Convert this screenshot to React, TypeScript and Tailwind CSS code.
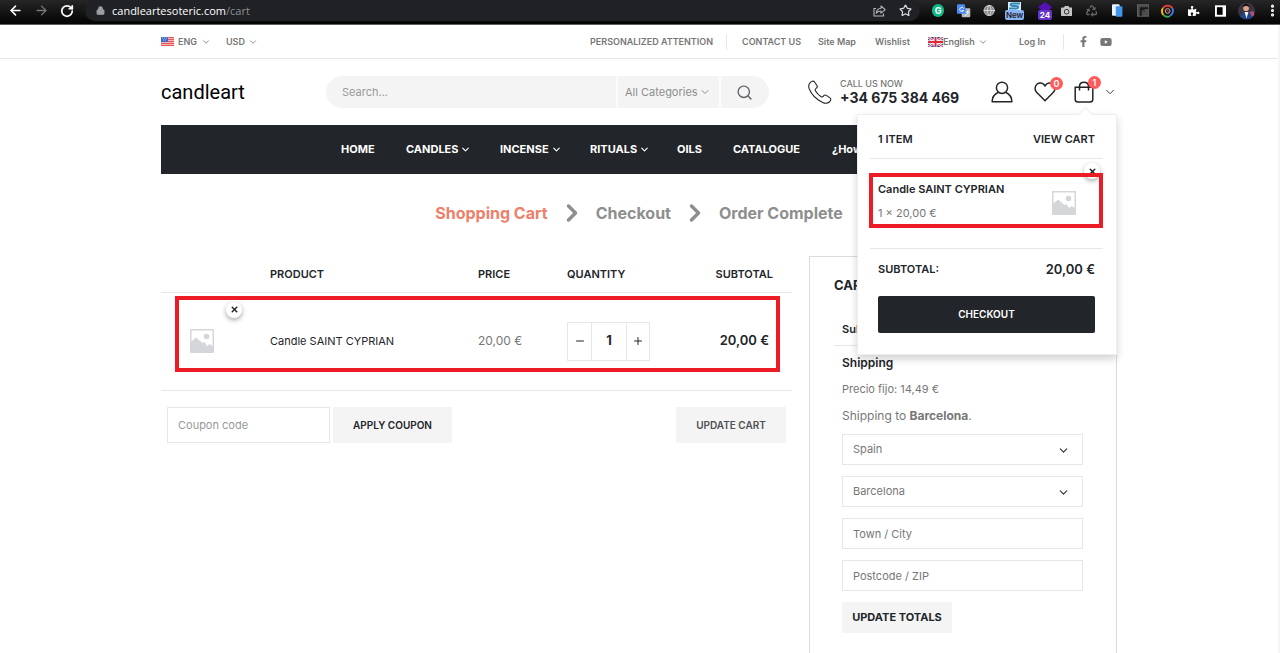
import React from 'react';
import {
  ArrowLeft, ArrowRight, RotateCw, Lock, Star, Globe,
  ChevronDown, ChevronRight, Search, X, Minus, Plus, MoreVertical,
} from 'lucide-react';
import { FaCamera, FaFacebookF, FaPuzzlePiece, FaRecycle, FaYoutube } from 'react-icons/fa';

const navItems = [
  { label: 'HOME', width: 'w-[65px]', menu: false },
  { label: 'CANDLES', width: 'w-[94px]', menu: true },
  { label: 'INCENSE', width: 'w-[90px]', menu: true },
  { label: 'RITUALS', width: 'w-[87px]', menu: true },
  { label: 'OILS', width: 'w-[56px]', menu: false },
  { label: 'CATALOGUE', width: 'w-[99px]', menu: false },
  { label: '¿How', width: 'w-[120px]', menu: false },
];

const UsFlag = () => (
  <svg viewBox="0 0 13 9" className="h-[9px] w-[13px]">
    <rect width="13" height="9" fill="#f4b4b4" />
    {[0, 2, 4, 6, 8].map((y) => (
      <rect key={y} y={y} width="13" height="1" fill="#e8565b" />
    ))}
    <rect width="7" height="5" fill="#3c6bd0" />
    <path d="M1 1h1M3 1h1M5 1h1M2 3h1M4 3h1" stroke="#b9cdf5" strokeWidth="1" />
  </svg>
);

const UkFlag = () => (
  <svg viewBox="0 0 15 10" className="h-[10px] w-[15px]">
    <rect width="15" height="10" fill="#2b4aa0" />
    <path d="M0 0l15 10M15 0L0 10" stroke="#fff" strokeWidth="2.4" />
    <path d="M0 0l15 10M15 0L0 10" stroke="#e0293b" strokeWidth="1" />
    <path d="M7.5 0v10M0 5h15" stroke="#fff" strokeWidth="3.6" />
    <path d="M7.5 0v10M0 5h15" stroke="#e0293b" strokeWidth="2" />
  </svg>
);

const Placeholder = () => (
  <svg viewBox="0 0 24 24" className="size-6">
    <rect width="24" height="24" rx="1" fill="#d4d6da" />
    <path d="M1.500 1.500h21V17l-3-2-2.500 2-2.500-4-2 1L6 8.500l-4.500 4z" fill="#fff" />
    <circle cx="16.500" cy="7.500" r="2.800" fill="#d4d6da" />
  </svg>
);

const PhoneIcon = () => (
  <svg viewBox="0 0 24 24" className="size-6" fill="none" stroke="#222529" strokeWidth="1.1" strokeLinejoin="round">
    <path d="M2.200 2.700C3.300 1.300 5.200.6 6.200 1.500l2.700 4c.7 1.200.2 2.200-.8 2.900-1 .7-1.200 1.400-.7 2.300 1.300 2.300 3.300 4.500 5.700 6 .9.600 1.600.3 2.300-.6.8-1 1.900-1.400 3-.7l3.900 2.700c1 .9.400 2.700-1 3.900-1.800 1.500-4.200 1.500-6.700.4C8.600 19.600 3.400 14.400 1.200 8.800.4 6.500.6 4.200 2.200 2.700z" />
  </svg>
);

const UserIcon = () => (
  <svg viewBox="0 0 22 22" className="size-[22px]" fill="none" stroke="#222529" strokeWidth="1.500" strokeLinejoin="round">
    <circle cx="11" cy="6.800" r="5.600" />
    <path d="M7.500 11.300C3.600 13 1.200 16 1.100 20.800h19.800c-.1-4.800-2.500-7.800-6.400-9.500" />
  </svg>
);

const HeartIcon = () => (
  <svg viewBox="0 0 22 20" className="h-5 w-[22px]" fill="none" stroke="#222529" strokeWidth="1.500">
    <path d="M11 18.800L2.600 10.200C.4 7.900.7 4.200 2.900 2.300 5.200.4 8.600.8 10.400 3l.6.900.6-.9c1.800-2.200 5.200-2.600 7.500-.7 2.200 1.900 2.500 5.600.3 7.900z" />
  </svg>
);

const BagIcon = () => (
  <svg viewBox="0 0 20 22" className="h-[22px] w-5" fill="none" stroke="#222529" strokeWidth="1.500">
    <path d="M1.200 6.200h17.600v12c0 1.800-1 2.800-2.800 2.800H4c-1.800 0-2.800-1-2.800-2.800z" />
    <path d="M5.500 9.500V5.500C5.500 2.900 7.300 1.200 10 1.200s4.500 1.700 4.500 4.300v4" />
  </svg>
);

const ShareIcon = () => (
  <svg viewBox="0 0 13 13" className="h-[13px] w-[13px]" fill="none" stroke="#b4b6b9" strokeWidth="1.100">
    <path d="M3 4.500H1v7.500h9.500V9.500" />
    <path d="M3.200 9.200C3.500 6 5.300 4.300 8 4.200V2l4.200 3.700L8 9.200V7C6 7 4.500 7.600 3.200 9.200z" strokeLinejoin="round" />
  </svg>
);

const Badge = ({ count }: { count: number }) => (
  <span className="absolute -right-[7px] -top-[5px] flex size-[13px] items-center justify-center rounded-full bg-[#ff5b5b] text-[9px] font-semibold text-white">
    {count}
  </span>
);

const RemoveButton = ({ label }: { label: string }) => (
  <button aria-label={label} className="flex size-4 items-center justify-center rounded-full bg-white shadow-[0_2px_5px_rgba(0,0,0,0.35)]">
    <X size={9} strokeWidth={4} className="text-[#222529]" />
  </button>
);

const BrowserBar = () => (
  <div className="flex h-[25px] shrink-0 items-center border-b border-[#5d5d5d] bg-gradient-to-b from-[#262626] to-[#050505] pb-[3px] text-white">
    <div className="flex w-[85px] items-center gap-[11px] pl-2">
      <button aria-label="Back"><ArrowLeft size={15} strokeWidth={2.500} /></button>
      <button aria-label="Forward" className="text-[#777]"><ArrowRight size={15} strokeWidth={2.200} /></button>
      <button aria-label="Reload"><RotateCw size={14} strokeWidth={3} /></button>
    </div>
    <div className="flex h-[21px] flex-1 items-center rounded-full bg-[#202124] pl-[11px] pr-2">
      <Lock size={9} strokeWidth={3} className="fill-[#9aa0a6] text-[#9aa0a6]" />
      <p className="ml-[7px] flex-1 font-['Open_Sans',sans-serif] text-[11px] leading-5">
        candleartesoteric.com<span className="text-[#8c9095]">/cart</span>
      </p>
      <button aria-label="Share" className="mr-[13px]"><ShareIcon /></button>
      <button aria-label="Bookmark"><Star size={13} strokeWidth={2.200} className="text-[#dadce0]" /></button>
    </div>
    <div className="flex w-[360px] items-center pl-[12px]">
      <span className="flex size-[13px] items-center justify-center rounded-full bg-[#11b886] text-[9px] font-bold">G</span>
      <svg viewBox="0 0 14 14" className="ml-[13px] size-[14px]">
        <rect x="5" y="4" width="9" height="9.500" rx="1" fill="#b9bdc2" />
        <path d="M1 0h7l2.500 10H1a1 1 0 0 1-1-1V1a1 1 0 0 1 1-1z" fill="#4c8bf5" />
        <path d="M7 4.200A2.200 2.200 0 1 0 7 6.500H5M9 8h4M11 7v1.500c-.5 2-1.500 3-2.500 3.500" stroke="#fff" fill="none" strokeWidth=".9" />
      </svg>
      <Globe size={13} strokeWidth={1.500} className="ml-[12px] fill-[#8a8a8a] text-[#e4e4e4]" />
      <div className="ml-[10px] flex w-5 flex-col items-center">
        <svg viewBox="0 0 13 8" className="h-2 w-[13px]">
          <rect width="13" height="8" fill="#d7edf8" />
          <path d="M12 1.500H5C1.500 1.500 2 4 5 4h3c3 0 3 2.500 0 2.500H1" fill="none" stroke="#3586b7" strokeWidth="1.800" />
        </svg>
        <span className="rounded-[2px] bg-[#8ab4f8] px-px text-[8px] font-semibold leading-[10px] text-[#202124]">New</span>
      </div>
      <div className="ml-[13px] flex w-4 flex-col items-center">
        <svg viewBox="0 0 14 8" className="h-2 w-[14px]"><path d="M7 0l7 5-3 3H3L0 5z" fill="#5412b6" /></svg>
        <span className="rounded-[2px] bg-[#6534c8] px-[2px] text-[8px] font-bold leading-[10px]">24</span>
      </div>
      <FaCamera size={12} className="ml-[8px] text-[#c4c4c4]" />
      <FaRecycle size={12} className="ml-[14px] text-[#666]" />
      <svg viewBox="0 0 12 13" className="ml-[15px] h-[13px] w-3">
        <rect width="8" height="12" rx="1" fill="#e9f3fd" /><rect x="4" y="2" width="7" height="11" rx="1" fill="#4296e9" />
      </svg>
      <svg viewBox="0 0 13 13" className="ml-[13px] size-[13px]">
        <rect x=".5" y=".5" width="12" height="12" fill="#4c4c4c" stroke="#666" />
        <path d="M3 12V3h9v2H8v3H5v4z" fill="#191919" />
        <path d="M5 7h3" stroke="#777" />
      </svg>
      <svg viewBox="0 0 14 14" className="ml-[12px] size-[14px]" fill="none" strokeWidth="2">
        <path d="M2 4a6 6 0 0 1 10 0" stroke="#ea4335" /><path d="M12 4a6 6 0 0 1-2.500 8" stroke="#3c7bea" />
        <path d="M9.500 12.500A6 6 0 0 1 2.500 11" stroke="#34a853" /><path d="M2.500 11A6 6 0 0 1 2 4" stroke="#fbbc05" />
        <circle cx="7" cy="7" r="2.500" stroke="#bbb" strokeWidth="1" /><path d="M5 5l4 4" stroke="#ea4335" strokeWidth="1" />
      </svg>
      <FaPuzzlePiece size={12} className="ml-[14px]" />
      <svg viewBox="0 0 12 12" className="ml-[15px] size-3">
        <rect x="1" y="1" width="10" height="10" fill="#000" stroke="#fff" strokeWidth="2" />
        <rect x="8" y="1" width="3" height="10" fill="#fff" />
      </svg>
      <svg viewBox="0 0 18 18" className="ml-[12px] size-[18px]">
        <defs><clipPath id="avatar"><circle cx="9" cy="9" r="9" /></clipPath></defs>
        <g clipPath="url(#avatar)">
          <rect width="18" height="18" fill="#3c3440" />
          <path d="M2 18c0-6 3-8 7-8s7 2 7 8z" fill="#1f4489" />
          <path d="M7 10h4l-2 7z" fill="#f4f4f4" />
          <circle cx="8.500" cy="6" r="3" fill="#d9a488" />
          <path d="M5 5c0-5 7-5 7 0-2-1.500-4-2-7 0z" fill="#171313" />
          <path d="M12 10l4-1 2 5-3 1z" fill="#b0507a" />
        </g>
      </svg>
      <MoreVertical size={15} strokeWidth={3} className="ml-[10px] shrink-0" />
    </div>
  </div>
);

const TopBar = () => (
  <div className="border-b border-[#e7e7e7] text-[9px] font-semibold text-[#777]">
    <div className="mx-auto flex h-[33px] max-w-[956px] items-center">
      <button className="flex w-[65px] items-center gap-[4px]">
        <UsFlag />ENG<ChevronDown size={10} />
      </button>
      <button className="flex items-center gap-[3px]">USD<ChevronDown size={10} /></button>
      <div className="ml-auto flex items-center">
        <a href="#attention" className="w-[136px] whitespace-nowrap">PERSONALIZED ATTENTION</a>
        <span className="mr-[15px] h-4 w-px bg-[#e7e7e7]" />
        <a href="#contact" className="w-[76px] whitespace-nowrap">CONTACT US</a>
        <a href="#sitemap" className="w-[57px]">Site Map</a>
        <a href="#wishlist" className="w-[53px]">Wishlist</a>
        <button className="flex w-[91px] items-center"><UkFlag />English<ChevronDown size={10} className="ml-[3px]" /></button>
        <a href="#login" className="w-[44px]">Log In</a>
        <span className="h-4 w-px bg-[#e7e7e7]" />
        <a href="#facebook" aria-label="Facebook" className="ml-[14px]"><FaFacebookF size={11} /></a>
        <a href="#youtube" aria-label="YouTube" className="ml-[11px] mr-[5px]"><FaYoutube size={12} /></a>
      </div>
    </div>
  </div>
);

const MiniCart = () => (
  <div className="absolute right-0 top-[36px] z-20 h-[241px] w-[260px] border border-[#eee] bg-white pl-3 pr-[13px] shadow-[0_4px_8px_rgba(0,0,0,0.18)]">
    <span className="absolute -top-[6px] right-[25px] size-[11px] rotate-45 border-l border-t border-[#eee] bg-white" />
    <div className="flex h-[44px] items-center justify-between border-b border-[#e7e7e7] px-2 pt-[6px] text-[11px] font-semibold">
      <span>1 ITEM</span>
      <a href="#cart">VIEW CART</a>
    </div>
    <div className="relative -ml-px mt-[14px]">
      <div className="absolute -top-[10px] right-[3px]"><RemoveButton label="Remove Candle SAINT CYPRIAN" /></div>
      <div className="relative flex h-[55px] items-center justify-between border-4 border-[#ed1c24] pl-[5px] pr-[23px]">
        <div>
          <p className="text-[11px] font-semibold leading-6">Candle SAINT CYPRIAN</p>
          <p className="text-[11px] leading-6 text-[#777]">1 × 20,00 €</p>
        </div>
        <div className="pt-1"><Placeholder /></div>
      </div>
    </div>
    <div className="mt-[20px] flex items-center justify-between border-t border-[#e7e7e7] px-2 pt-[10px] font-semibold leading-5">
      <span className="text-[11px]">SUBTOTAL:</span>
      <span className="text-[13px]">20,00 €</span>
    </div>
    <div className="px-2 pt-[17px]">
      <button className="h-[37px] w-full rounded-xs bg-[#222529] text-[10px] font-semibold text-white">CHECKOUT</button>
    </div>
  </div>
);

const Header = () => (
  <header className="mx-auto flex h-[66px] w-full max-w-[956px] items-center">
    <a href="#home" className="w-[165px] font-['Roboto',sans-serif] text-xl text-black">candleart</a>
    <form className="flex h-8 w-[443px] overflow-hidden rounded-full bg-[#f4f4f4] text-[11px] text-[#8d8d8d]">
      <input aria-label="Search" placeholder="Search..." className="min-w-0 flex-1 px-4 outline-none placeholder:text-[#999]" />
      <div className="relative w-[105px] border-x-2 border-[#fbfbfb]">
        <select aria-label="Category" className="h-full w-full appearance-none pl-[7px] outline-none">
          <option>All Categories</option>
        </select>
        <ChevronDown size={12} className="pointer-events-none absolute right-[8px] top-[10px]" />
      </div>
      <button aria-label="Submit search" type="button" className="w-12 pl-[15px] text-[#606669]"><Search size={17} strokeWidth={2} /></button>
    </form>
    <div className="relative ml-auto flex items-center">
      <PhoneIcon />
      <div className="ml-2 w-[151px] whitespace-nowrap">
        <p className="text-[9px] font-medium leading-3 text-[#777]">CALL US NOW</p>
        <p className="text-sm font-bold leading-4">+34 675 384 469</p>
      </div>
      <a href="#account" aria-label="Account"><UserIcon /></a>
      <a href="#wishlist" aria-label="Wishlist" className="relative ml-[21px]"><HeartIcon /><Badge count={0} /></a>
      <button aria-label="Cart" className="relative ml-[18px]"><BagIcon /><Badge count={1} /></button>
      <ChevronDown size={14} strokeWidth={1.500} className="ml-[9px]" />
      <MiniCart />
    </div>
  </header>
);

const Steps = () => (
  <div className="flex h-[82px] items-center justify-center gap-[10px] pb-[4px] text-base font-bold text-[#8e8e8e]">
    <a href="#cart" className="text-[#ee8069]">Shopping Cart</a>
    <ChevronRight size={28} strokeWidth={3} />
    <a href="#checkout">Checkout</a>
    <ChevronRight size={28} strokeWidth={3} />
    <span>Order Complete</span>
  </div>
);

const CartTable = () => (
  <section className="min-w-0 flex-1">
    <div className="relative">
      <table className="w-full table-fixed text-left text-[11px]">
        <thead>
          <tr className="h-9 border-b border-[#e7e7e7]">
            <th aria-label="Image" className="w-[109px]" />
            <th className="font-semibold">PRODUCT</th>
            <th className="w-[89px] font-semibold">PRICE</th>
            <th className="w-[122px] font-semibold">QUANTITY</th>
            <th className="w-[103px] pr-[19px] text-right font-semibold">SUBTOTAL</th>
          </tr>
        </thead>
        <tbody>
          <tr className="h-[98px] border-b border-[#e7e7e7]">
            <td className="relative pl-[29px]">
              <Placeholder />
              <div className="absolute left-[65px] top-[9px]"><RemoveButton label="Remove item" /></div>
            </td>
            <td><a href="#product">Candle SAINT CYPRIAN</a></td>
            <td className="text-xs text-[#777]">20,00 €</td>
            <td>
              <div className="flex h-[39px] w-[83px] border border-[#e7e7e7]">
                <button aria-label="Decrease" className="flex w-[23px] items-center justify-center"><Minus size={12} /></button>
                <input aria-label="Quantity" defaultValue="1" className="w-9 border-x border-[#e7e7e7] text-center text-[13px] font-bold outline-none" />
                <button aria-label="Increase" className="flex w-[22px] items-center justify-center"><Plus size={12} /></button>
              </div>
            </td>
            <td className="pr-[23px] text-right text-[13px] font-semibold whitespace-nowrap">20,00 €</td>
          </tr>
        </tbody>
      </table>
      <div className="pointer-events-none absolute left-[14px] right-[12px] top-[40px] h-[76px] border-4 border-[#ed1c24]" />
    </div>
    <div className="flex h-[69px] items-center px-[6px] text-[10px] font-semibold">
      <input aria-label="Coupon code" placeholder="Coupon code" className="h-9 w-[163px] border border-[#e7e7e7] px-[10px] text-[11px] font-normal outline-none placeholder:text-[#999]" />
      <button className="ml-[3px] h-9 w-[119px] bg-[#f4f4f4]">APPLY COUPON</button>
      <button className="ml-auto h-9 w-[110px] bg-[#f4f4f4] text-[#4e5053]">UPDATE CART</button>
    </div>
  </section>
);

const SelectBox = ({ label }: { label: string }) => (
  <div className="relative">
    <select aria-label={label} className="h-[31px] w-full appearance-none border border-[#e7e7e7] px-[10px] outline-none">
      <option>{label}</option>
    </select>
    <ChevronDown size={13} className="pointer-events-none absolute right-[13px] top-[10px] text-[#333]" />
  </div>
);

const Totals = () => (
  <aside className="w-[308px] border border-b-0 border-[#dcdcdc] pl-6 pr-[25px] pt-4 text-[11px] text-[#777]">
    <h2 className="text-[13px] font-bold leading-6 text-[#222529]">CART TOTALS</h2>
    <div className="mt-[16px] flex h-[33px] items-center justify-between border-b border-[#e7e7e7] px-2 font-semibold text-[#222529]">
      <span>Subtotal</span>
      <span>20,00 €</span>
    </div>
    <div className="flex flex-col px-2 pt-[7px]">
      <h3 className="text-xs font-semibold leading-5 text-[#222529]">Shipping</h3>
      <p className="mt-[6px] leading-5">Precio fijo: 14,49 €</p>
      <p className="mt-[7px] text-xs leading-5">Shipping to <strong>Barcelona</strong>.</p>
      <div className="mt-[8px] flex flex-col gap-[11px]">
        <SelectBox label="Spain" />
        <SelectBox label="Barcelona" />
        <input aria-label="Town / City" placeholder="Town / City" className="h-[31px] border border-[#e7e7e7] px-[10px] outline-none placeholder:text-[#777]" />
        <input aria-label="Postcode / ZIP" placeholder="Postcode / ZIP" className="h-[31px] border border-[#e7e7e7] px-[10px] outline-none placeholder:text-[#777]" />
        <button className="h-[31px] w-[110px] bg-[#f4f4f4] font-bold text-[#222529]">UPDATE TOTALS</button>
      </div>
    </div>
  </aside>
);

const App = () => {
  return (
    <div className="flex h-screen flex-col overflow-hidden bg-white font-['Inter',sans-serif] text-[#222529]">
      <BrowserBar />
      <div className="flex flex-1 flex-col border-r-2 border-[#f5f5f5]">
        <TopBar />
        <Header />
        <nav className="mx-auto flex h-[49px] w-full max-w-[956px] shrink-0 items-center overflow-hidden bg-[#222529] pl-[180px] text-[11px] font-bold text-white">
          {navItems.map((item) => (
            <a key={item.label} href="#shop" className={`flex shrink-0 items-center gap-[2px] whitespace-nowrap ${item.width}`}>
              {item.label}
              {item.menu && <ChevronDown size={11} strokeWidth={2.500} />}
            </a>
          ))}
        </nav>
        <Steps />
        <main className="mx-auto flex w-full max-w-[956px] flex-1 gap-[17px]">
          <CartTable />
          <Totals />
        </main>
      </div>
    </div>
  );
};

export default App;
